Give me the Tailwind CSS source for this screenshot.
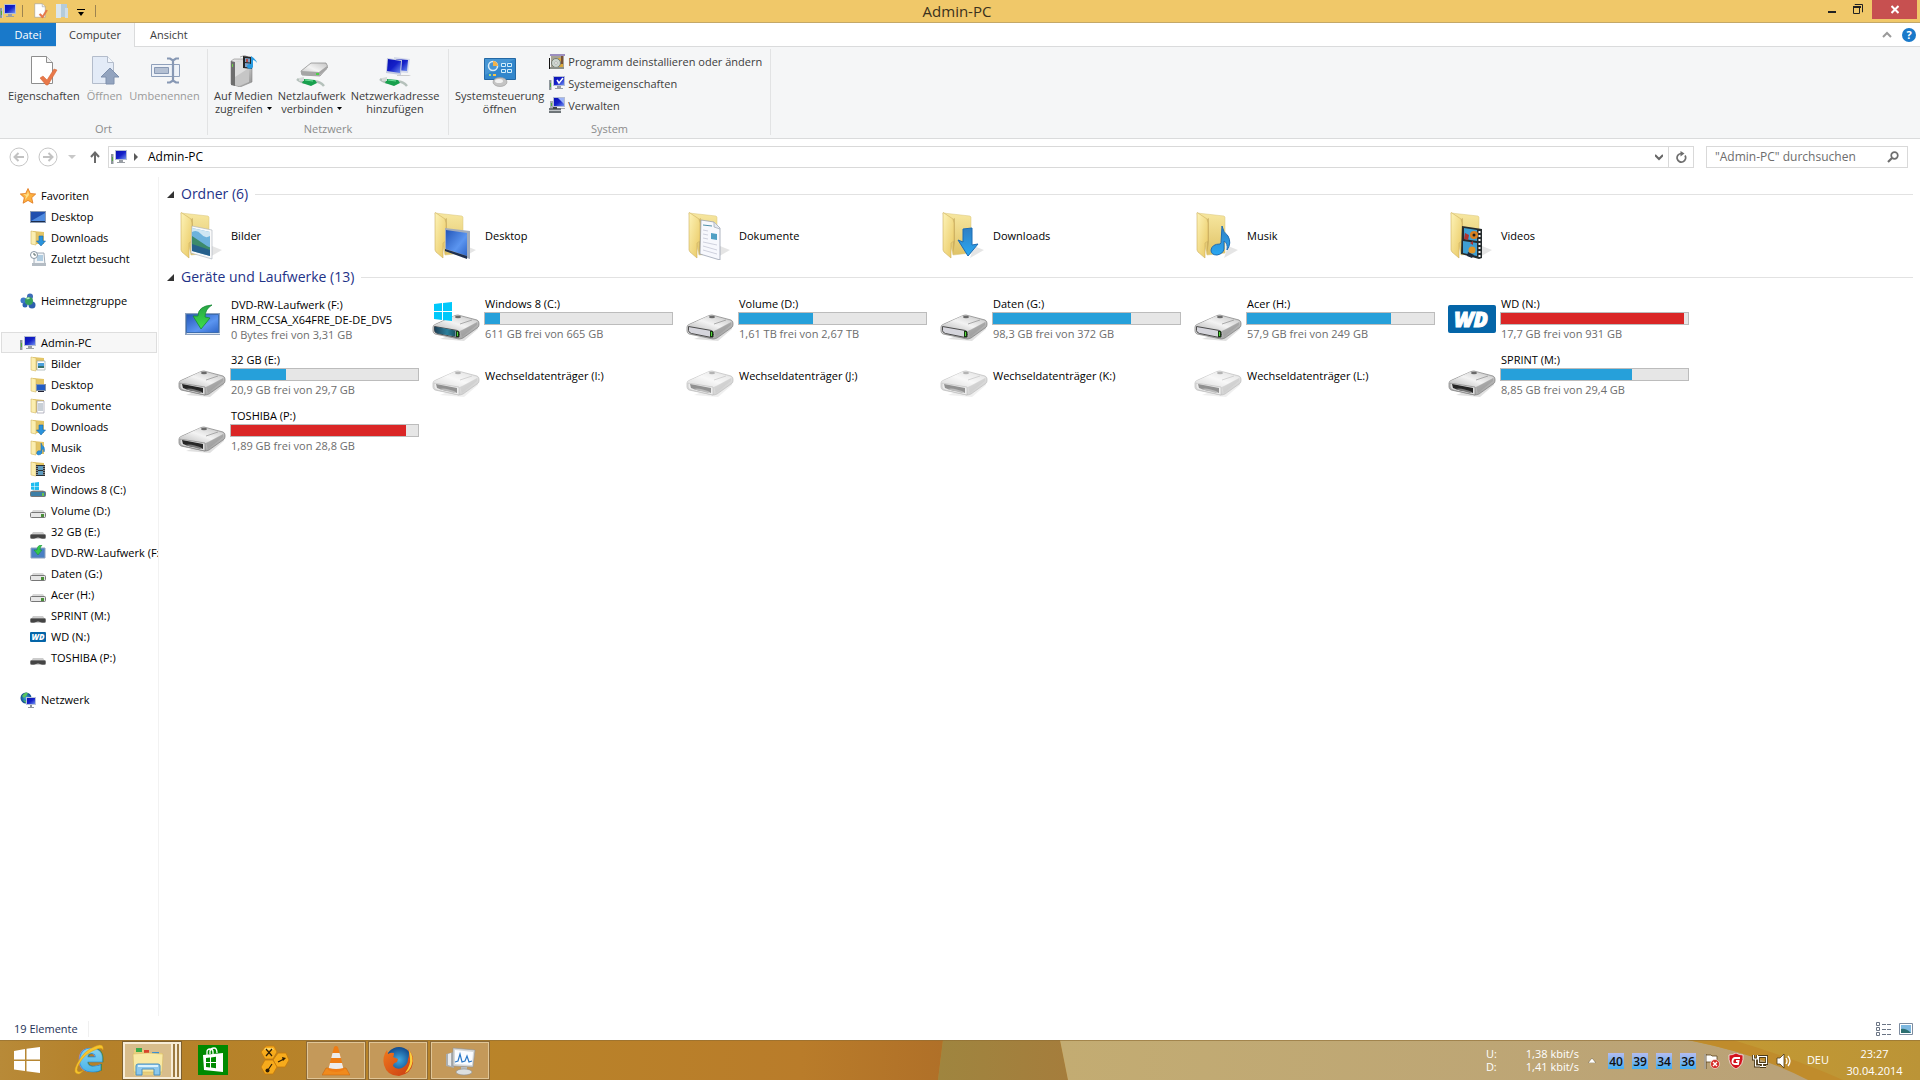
<!DOCTYPE html>
<html lang="de">
<head>
    <meta charset="UTF-8">
    <meta name="viewport" content="width=device-width, initial-scale=1.0">
    <title>Admin-PC</title>
    <script src="https://cdn.jsdelivr.net/npm/@tailwindcss/browser@4"></script>
</head>
<body class="h-screen flex flex-col overflow-hidden bg-white font-['Open_Sans','Noto_Sans',sans-serif] text-[12px] leading-4 text-black">

    <!-- Symbole -->
    <svg class="absolute w-0 h-0" aria-hidden="true">
        <defs>
            <linearGradient id="g-front" x1="0" y1="0" x2="1" y2="1"><stop offset="0" stop-color="#fdf3b8"/><stop offset="1" stop-color="#e9c75f"/></linearGradient>
            <linearGradient id="g-back" x1="0" y1="0" x2="0" y2="1"><stop offset="0" stop-color="#f7e7a0"/><stop offset="1" stop-color="#dfc266"/></linearGradient>
            <linearGradient id="g-screen" x1="0" y1="0" x2="1" y2="1"><stop offset="0" stop-color="#0a12b4"/><stop offset=".5" stop-color="#1420c8"/><stop offset="1" stop-color="#6f8ff0"/></linearGradient>
            <linearGradient id="g-desk" x1="0" y1="0" x2="1" y2="1"><stop offset="0" stop-color="#2456b8"/><stop offset=".6" stop-color="#5b95f0"/><stop offset="1" stop-color="#2f66c8"/></linearGradient>
            <linearGradient id="g-arrow" x1="0" y1="0" x2="0" y2="1"><stop offset="0" stop-color="#2f7fc4"/><stop offset="1" stop-color="#2aa8f2"/></linearGradient>
            <linearGradient id="g-metal" x1="0" y1="0" x2="1" y2="1"><stop offset="0" stop-color="#e9e9e9"/><stop offset=".5" stop-color="#cfcfcf"/><stop offset="1" stop-color="#8c8c8c"/></linearGradient>
            <linearGradient id="g-top" x1="0" y1="1" x2="1" y2="0"><stop offset="0" stop-color="#b9b9b9"/><stop offset=".5" stop-color="#f3f3f3"/><stop offset="1" stop-color="#c4c4c4"/></linearGradient>
            <linearGradient id="g-win" x1="0" y1="0" x2="1" y2="0"><stop offset="0" stop-color="#1f3f55"/><stop offset=".6" stop-color="#2a7f9c"/><stop offset="1" stop-color="#1c5561"/></linearGradient>
            <linearGradient id="g-green" x1="0" y1="0" x2="0" y2="1"><stop offset="0" stop-color="#27a344"/><stop offset="1" stop-color="#3fe04a"/></linearGradient>
            <linearGradient id="g-ie" x1="0" y1="0" x2="0" y2="1"><stop offset="0" stop-color="#bdeefd"/><stop offset="1" stop-color="#2ba4e0"/></linearGradient>
            <linearGradient id="g-temp" x1="0" y1="0" x2="0" y2="1"><stop offset="0" stop-color="#b4bcf0"/><stop offset="1" stop-color="#45aef0"/></linearGradient>
            <linearGradient id="g-fox" x1="0" y1="0" x2="1" y2="1"><stop offset="0" stop-color="#f07a1c"/><stop offset="1" stop-color="#c93a12"/></linearGradient>
            <radialGradient id="g-globe"><stop offset="0" stop-color="#3fa9e0"/><stop offset="1" stop-color="#124a8c"/></radialGradient>
        </defs>

        <symbol id="pc" viewBox="0 0 16 16">
            <path d="M0 5h3v10H0z" fill="#8f979d"/><path d="M2 5h1v10H2z" fill="#c9cdd0"/><path d="M1 8h1v4H1z" fill="#4fae3a"/>
            <path d="M4 1h12v10H4z" fill="#b4bdd3"/><path d="M5 2h10v8H5z" fill="url(#g-screen)"/>
            <path d="M8 11h4v2H8zM6 13h8v1H6z" fill="#9a9fa5"/>
        </symbol>
        <symbol id="page-check" viewBox="0 0 32 32">
            <path d="M3.500 1.500h15l6 6v21h-21z" fill="#fff" stroke="#8e8e8e"/><path d="M18.500 1.500v6h6" fill="#f2f2f2" stroke="#8e8e8e"/>
            <path d="M12 23l3-2 4 4 7-11 3 1-9 15h-2z" fill="#e8784a" stroke="#d2602f" stroke-width=".5"/>
        </symbol>
        <symbol id="page-open" viewBox="0 0 32 32">
            <path d="M3.500 1.500h15l6 6v21h-21z" fill="#e3ebf7" stroke="#b3bccb"/><path d="M18.500 1.500v6h6" fill="#f4f7fc" stroke="#b3bccb"/>
            <path d="M21 13l9 9h-5v7h-8v-7h-5z" fill="#93a4bf" stroke="#7e90ad"/>
        </symbol>
        <symbol id="rename" viewBox="0 0 32 32">
            <path d="M2.500 9.500h28v12h-28z" fill="#eef2f8" stroke="#8fa0bb"/><path d="M5.500 12.500h14v6h-14z" fill="#b4c0d3" stroke="#8798b4"/>
            <path d="M18 3.500h3l3 2 3-2h3M24 5v22M18 27.500h3l3-2 3 2h3" fill="none" stroke="#8798b4" stroke-width="2.200"/>
        </symbol>
        <symbol id="media" viewBox="0 0 32 32">
            <path d="M4 6l3-2h15l3 2v21l-12 5-9-3z" fill="url(#g-metal)" stroke="#868686" stroke-width=".6"/>
            <path d="M4 6l4 1v24l-4-1z" fill="#6e6e6e"/><path d="M8 7l14-2v22l-10 4-4-1z" fill="#c6c6c6"/><path d="M8 7l14-2v8L8 22z" fill="#dedede"/><path d="M5 9h1v3H5z" fill="#6fd04a"/>
            <path d="M13 2q5-3 8 0" fill="none" stroke="#aaa"/>
            <path d="M16 1l9 1v12l-9-1z" fill="#262626"/><path d="M18 3l5 .5v4l-5-.5zM18 8l5 .5v4l-5-.5z" fill="#7aa0c8"/><path d="M19 4h2v3h-2z" fill="#b44b46"/>
            <path d="M26 1v10a3 2.500 0 1 1-2-2V1q5 3 6 7-2-3-4-3z" fill="#2a9be0"/>
        </symbol>
        <symbol id="plug" viewBox="0 0 32 32">
            <path d="M1 24q6 5 14 3t13 4" fill="none" stroke="#b5c1bb" stroke-width="2.500"/><path d="M8 24l11 1 2 3-6 3-9-3z" fill="#18a04e"/><path d="M9 25l8 1" stroke="#6fe09a"/><path d="M3 23l5-1v4H3z" fill="#d5dad8"/>
        </symbol>
        <symbol id="netdrive" viewBox="0 0 32 32">
            <path d="M5 16L15 8h15l2 4-8 9-18-1z" fill="url(#g-top)" stroke="#858585" stroke-width=".7"/><path d="M5 16l18 1 8-6v3l-8 7-17-1z" fill="#a5a5a5"/><path d="M20 18h3v2h-3z" fill="#4bd048"/>
            <use href="#plug"/>
        </symbol>
        <symbol id="netplace" viewBox="0 0 32 32">
            <path d="M15 2l16 2-2 14-13-1z" fill="#d4d9ea"/><path d="M17 4l12 1-1 11-11-1z" fill="url(#g-screen)"/>
            <path d="M8 3l15 2-1 15-15-2z" fill="#c3cae0"/><path d="M9 4l13 2-1 12-13-2z" fill="url(#g-screen)"/>
            <path d="M18 20h12l2 1H18z" fill="#ccc"/><use href="#plug"/>
        </symbol>
        <symbol id="control" viewBox="0 0 32 32">
            <path d="M.5 3.500h31v21H.5z" fill="#3286cb" stroke="#2468a4"/><path d="M1 4h30L1 20z" fill="#5aa6de" opacity=".5"/>
            <circle cx="9" cy="11" r="4.500" fill="none" stroke="#d8ecf8" stroke-width="1.500"/><path d="M9 11V6a5 5 0 0 1 5 5z" fill="#f0b24a"/>
            <path d="M17.500 8.500h4v3h-4zM23.500 8.500h4v3h-4zM17.500 14.500h4v3h-4zM23.500 14.500h4v3h-4z" fill="#2a8ad0" stroke="#d2ecfa"/>
            <path d="M5 19h2v2H5z" fill="#9fe07a"/><path d="M9 19h3v2H9z" fill="#f4c14d"/>
            <ellipse cx="16" cy="27" rx="7" ry="4.500" fill="#c4c4c4" stroke="#999" stroke-width=".6"/><ellipse cx="15" cy="26" rx="4" ry="2" fill="#f2f2f2"/>
        </symbol>
        <symbol id="uninstall" viewBox="0 0 16 16">
            <path d="M1 1h15v2H1z" fill="#9c8fc0"/><path d="M2 3h13v12H2z" fill="#a9a493"/><path d="M9 5h5v9H9z" fill="#dba93a"/><path d="M12 3h2v8h-2z" fill="#7a5236"/>
            <circle cx="7" cy="10" r="4.500" fill="#ccd5ce" stroke="#747a72"/><circle cx="7" cy="10" r="1.300" fill="#fff" stroke="#888" stroke-width=".5"/><path d="M0 5h1v11H0z" fill="#111"/><path d="M1 14h14v2H1z" fill="#8c9189"/>
        </symbol>
        <symbol id="pc-check" viewBox="0 0 16 16"><use href="#pc"/><path d="M8 5l2 3 4-5" fill="none" stroke="#fff" stroke-width="1.500"/></symbol>
        <symbol id="manage" viewBox="0 0 16 16">
            <path d="M4 0h12v10H4z" fill="#b4bdd3"/><path d="M5 1h10v8H5z" fill="url(#g-screen)"/><path d="M9 1h6v6z" fill="#9db4f6"/>
            <path d="M1 4h3v7H1z" fill="#a8adb2"/><path d="M2 6h1v3H2z" fill="#4fae3a"/><path d="M0 11h12v5H0z" fill="#6e7478"/><path d="M4 10h4v2H4z" fill="#3f4447"/><path d="M0 13h12v1H0z" fill="#c1c5c8"/><path d="M12 11h4v1h-4z" fill="#aaa"/>
        </symbol>

        <!-- Ordner 48px -->
        <symbol id="folder" viewBox="0 0 48 48">
            <path d="M30 46l14-8-10-4z" fill="#000" opacity=".1"/>
            <path d="M3 1l27 3 1 1v36l-18 2z" fill="url(#g-back)" stroke="#d9c47c" stroke-width=".5"/>
            <path d="M13 7l2-1v24l-2 12z" fill="#b8964a" opacity=".5"/>
            <path d="M3 1q0-1 1 0l9 6 1 4v18l-3 2v15l-7-6-1-2z" fill="url(#g-front)" stroke="#cdb060" stroke-width=".6"/>
        </symbol>
        <symbol id="f-bilder" viewBox="0 0 48 48"><use href="#folder"/>
            <path d="M14 14l20 4v29l-21-6z" fill="#fafafa" stroke="#a8b0b8" stroke-width=".6"/><path d="M14 16l18 4v24l-18-5z" fill="#6db2dc"/><path d="M14 20q5-3 9 2t9 2v-4l-18-4z" fill="#cfe6f3"/><path d="M14 28q8 1 18 9v7l-18-5z" fill="#26608c"/><path d="M14 24q6 4 12 8t6 3v3q-9-3-18-6z" fill="#3d8a6a"/>
        </symbol>
        <symbol id="f-desktop" viewBox="0 0 48 48"><use href="#folder"/>
            <path d="M13 16l25 3v28l-25-8z" fill="#a4adba"/><path d="M14 18l21 3v23l-21-7z" fill="url(#g-desk)"/><path d="M13 37l22 7v3l-22-8z" fill="#1e2f4e"/>
        </symbol>
        <symbol id="f-dokumente" viewBox="0 0 48 48"><use href="#folder"/>
            <path d="M15 8l13 2 6 6v32l-20-6z" fill="#f7f8fd" stroke="#8e97a8" stroke-width=".7"/><path d="M28 10v5l6 2" fill="#e3e8f0" stroke="#8e97a8" stroke-width=".6"/>
            <path d="M17 13l9 1" stroke="#4f8fa8"/><path d="M25 21l6 1v6l-6-1z" fill="#4f9fc4"/><path d="M17 18l5 1M17 22l5 1M17 26l5 1M17 30l14 3M17 34l14 4M17 38l14 4" stroke="#c4c6d4" stroke-width=".8"/>
        </symbol>
        <symbol id="f-downloads" viewBox="0 0 48 48"><use href="#folder"/><path d="M23 17l9-1v17l6-1-10 12-10-16 5 2z" fill="url(#g-arrow)" stroke="#1d6cb4"/></symbol>
        <symbol id="f-musik" viewBox="0 0 48 48"><use href="#folder"/><path d="M28 14q1 6 6 10 4 7-1 14 1-7-3-9v8q-1 5-7 6-6 0-6-5 1-6 9-6l1-1z" fill="url(#g-arrow)" stroke="#1d6cb4"/></symbol>
        <symbol id="f-videos" viewBox="0 0 48 48"><use href="#folder"/>
            <path d="M14 14l20 3v29l-3 1-18-5z" fill="#252b2d"/><path d="M16 16l13 2v11l-13-2zM15 29l14 2v13l-14-3z" fill="#3f9fd2"/>
            <circle cx="26" cy="23" r="4" fill="#d9801f"/><circle cx="26" cy="23" r="1.500" fill="#1d1d1d"/><path d="M17 21l4 2-1 5-4-1zM22 31l3-2v4z" fill="#b0322c"/><circle cx="24" cy="38" r="3.500" fill="#e09527"/><path d="M20 40l6 3-2 3-5-2z" fill="#1d2a3a"/>
            <path d="M31.500 19v26" stroke="#f2f2f2" stroke-width="2" stroke-dasharray="2 2"/>
        </symbol>

        <!-- Laufwerke 48px -->
        <symbol id="drive-body" viewBox="0 0 48 48">
            <path d="M8 44l24 2 14-12v-4z" fill="#000" opacity=".12"/>
            <path d="M1 32q0-2 3-3l18-8q2-1 4-1l19 5q2 1 2 3v2q0 2-2 3L31 43q-2 1-4 1L3 39q-2-1-2-3z" fill="url(#g-metal)" stroke="#7f7f7f" stroke-width=".7"/>
            <path d="M2 31q0-1 3-2l17-8h4l19 5q1 1-1 2L31 35q-2 1-4 1z" fill="url(#g-top)"/>
            <path d="M28 36l17-9v3L30 42z" fill="#999" opacity=".6"/><ellipse cx="26" cy="22" rx="3" ry="1.200" fill="#6a6a6a"/><path d="M28 29l12-4" stroke="#999" stroke-width=".8"/>
        </symbol>
        <symbol id="d-hdd" viewBox="0 0 48 48"><use href="#drive-body"/>
            <path d="M2.500 31.500l23 4q2 1 2 3v2q0 2-2 2l-20-4q-3-1-3-3z" fill="#d5d5dc" stroke="#4c4c4c"/><path d="M24 36h3v6h-3z" fill="#16380f"/><path d="M25 37h1v4h-1z" fill="#52d83a"/>
        </symbol>
        <symbol id="d-win" viewBox="0 0 48 48"><use href="#d-hdd"/>
            <path d="M2.500 31.500l21 4v6l-18-3q-3-1-3-3z" fill="url(#g-win)"/>
            <path d="M2 9l8-1v8H2zM11 8l9-1v9h-9zM2 17h8v8l-8-1zM11 17h9v9l-9-1z" fill="#00c8fa"/>
        </symbol>
        <symbol id="d-usb" viewBox="0 0 48 48"><use href="#drive-body"/>
            <path d="M2 32l25 4v8L5 39q-3-1-3-3z" fill="#ddd" stroke="#777" stroke-width=".6"/><path d="M4 33l21 4v5q-3-2-8-2T5 37z" fill="#262626"/><path d="M7 38q6-2 17 3l-2 1z" fill="#777"/>
        </symbol>
        <symbol id="d-empty" viewBox="0 0 48 48"><g opacity=".5"><use href="#d-usb"/></g></symbol>
        <symbol id="d-setup" viewBox="0 0 48 48">
            <path d="M7 18h35v22H7z" fill="#8ea2bf"/><path d="M8.500 19.500h32v18h-32z" fill="url(#g-desk)" stroke="#3c6db0"/><path d="M9 38h33v1H9z" fill="#dbe4ef"/>
            <path d="M34 10q-14 1-14 11h-5l8 13 9-11-5-1q0-8 7-12z" fill="url(#g-green)" stroke="#178a35" stroke-width=".8"/>
        </symbol>
        <symbol id="d-wd" viewBox="0 0 48 48">
            <rect y="10" width="48" height="28" rx="2" fill="#0465a8"/><text x="23" y="32" text-anchor="middle" font-family="Open Sans, sans-serif" font-size="21" font-weight="800" font-style="italic" fill="#fff" stroke="#fff">WD</text>
        </symbol>

        <!-- Kleine Symbole 16px -->
        <symbol id="s-star" viewBox="0 0 16 16"><path d="M8 .5l2.300 5 5.400.5-4 3.700 1.200 5.500L8 12.400l-4.900 2.800 1.200-5.500L.3 6l5.400-.5z" fill="#fcb040" stroke="#e0761a" stroke-width=".8"/><path d="M8 3l1 4-4 5 1-4-3-2 4 .5z" fill="#ffe08a"/></symbol>
        <symbol id="s-screen" viewBox="0 0 16 16"><path d="M0 2h16v12H0z" fill="#8a9bb5"/><path d="M1 3h14v9H1z" fill="#1f4fae"/><path d="M1 12L15 4v8z" fill="#4f8be0"/><path d="M1 12h14v1H1z" fill="#1a2c4c"/></symbol>
        <symbol id="s-folder" viewBox="0 0 16 16"><path d="M3 1l11 1v12H3z" fill="#e3c566"/><path d="M1 1l5 1v13l-5-1z" fill="#fbeeb0" stroke="#d3b762" stroke-width=".6"/></symbol>
        <symbol id="s-downloads" viewBox="0 0 16 16"><use href="#s-folder"/><path d="M9 6h4v5h2.500L11 16 6.500 11H9z" fill="#2a93dc" stroke="#1c69ad" stroke-width=".6"/></symbol>
        <symbol id="s-bilder" viewBox="0 0 16 16"><use href="#s-folder"/><path d="M7 5h8v9H7z" fill="#fff" stroke="#9aa" stroke-width=".7"/><path d="M8 7h6v3H8z" fill="#4aa0dc"/><path d="M8 10h6v2H8z" fill="#36716c"/></symbol>
        <symbol id="s-desktop" viewBox="0 0 16 16"><use href="#s-folder"/><path d="M6 7h10v7H6z" fill="#8393aa"/><path d="M7 8h8v5H7z" fill="#235cc4"/><path d="M8 14h6v1H8z" fill="#223"/></symbol>
        <symbol id="s-dokumente" viewBox="0 0 16 16"><use href="#s-folder"/><path d="M7 3h7v12H7z" fill="#fff" stroke="#99a" stroke-width=".7"/><path d="M8 6h5M8 8h5M8 10h5M8 12h5" stroke="#789" stroke-width=".8"/></symbol>
        <symbol id="s-musik" viewBox="0 0 16 16"><use href="#s-folder"/><path d="M11 3q1 3 3 4 1 3 0 5 0-3-2-3v4q-1 2-4 2-2-1-1-3 1-2 4-1z" fill="#2a93dc" stroke="#1c69ad" stroke-width=".5"/></symbol>
        <symbol id="s-videos" viewBox="0 0 16 16"><use href="#s-folder"/><path d="M6 4h9v11H6z" fill="#2b3134"/><path d="M8 5h5v4H8zM8 10h5v4H8z" fill="#5f9cc0"/><path d="M14 5v10M7 5v10" stroke="#ddd" stroke-dasharray="1 1"/></symbol>
        <symbol id="s-recent" viewBox="0 0 16 16"><path d="M4 2h10l1 12H4z" fill="#f2f5f8" stroke="#8c98a5" stroke-width=".8"/><path d="M7 5h6M7 7h6M7 9h6" stroke="#6fa3c8"/><circle cx="4" cy="4" r="3.500" fill="#fff" stroke="#8795a2"/><path d="M4 2v2h2" fill="none" stroke="#566"/><path d="M2 12h14v3H2z" fill="#b4bcc4"/></symbol>
        <symbol id="s-home" viewBox="0 0 16 16"><circle cx="3.500" cy="7.500" r="3" fill="#3f78c8"/><circle cx="10" cy="3.500" r="3" fill="#3f6db8"/><circle cx="12" cy="12" r="3.500" fill="#2d5fae"/><circle cx="5" cy="12" r="2.500" fill="#2b62b2"/><circle cx="9" cy="8" r="4" fill="#35a05b"/><path d="M6 6q2-3 4-1-1 2-4 1z" fill="#b8ecc4"/></symbol>
        <symbol id="s-net" viewBox="0 0 16 16"><circle cx="6" cy="6" r="5.500" fill="url(#g-globe)"/><path d="M2 4q3-5 6-3-1 3-4 5zM3 8l3 1v2z" fill="#57c45c"/><path d="M6 5h10v8H6z" fill="#b9c3da"/><path d="M7 6h8v6H7z" fill="url(#g-screen)"/><path d="M10 13h2v2h-2zM8 15h6v1H8z" fill="#8d949c"/></symbol>
        <symbol id="s-hdd" viewBox="0 0 16 16"><path d="M3 7h10l2 3H1z" fill="#d8d8d8"/><rect x=".5" y="9.500" width="15" height="5" rx="1" fill="#e6e6e6" stroke="#777"/><path d="M11 11h3v3h-3z" fill="#4b8f3a"/></symbol>
        <symbol id="s-usb" viewBox="0 0 16 16"><path d="M3 8h10l2 3H1z" fill="#ccc"/><rect x=".5" y="10.500" width="15" height="4" rx="1" fill="#444" stroke="#777"/><path d="M4 15q4-3 8 0z" fill="#ccc"/></symbol>
        <symbol id="s-win" viewBox="0 0 16 16"><path d="M1 1l3.500-.5V4H1zM5 .5L9 0v4H5zM1 4.500h3.500V8L1 7.500zM5 4.500h4v4L5 8z" fill="#1fbdf0"/><path d="M3 8h10l2 2H1z" fill="#c9c9c9"/><rect x=".5" y="9.500" width="15" height="5" rx="1" fill="#3d7fa6" stroke="#777"/><path d="M12 11h2v3h-2z" fill="#6ac24c"/></symbol>
        <symbol id="s-setup" viewBox="0 0 16 16"><path d="M1 3h14v10H1z" fill="#4a7fc4" stroke="#8ea2bf"/><path d="M12 0Q7 0 7 5H4l4 5 4-5h-2q0-3 2-5z" fill="#35c84c" stroke="#178a35" stroke-width=".5"/></symbol>
        <symbol id="s-wd" viewBox="0 0 16 16"><rect y="3" width="16" height="10" rx="1" fill="#0465a8"/><text x="8" y="11" text-anchor="middle" font-family="Open Sans, sans-serif" font-size="8" font-weight="800" font-style="italic" fill="#fff">WD</text></symbol>
    </svg>

    <!-- Titelleiste -->
    <header class="shrink-0 h-[23px] grid grid-cols-[1fr_auto_1fr] items-center bg-[#f0c869] border-b border-[#c4a868]">
        <div class="flex items-center gap-[6px]">
            <svg class="w-4 h-4"><use href="#pc"/></svg>
            <span class="w-px h-3 bg-[#9d8450]"></span>
            <button class="ml-1" aria-label="Eigenschaften"><svg class="w-4 h-4"><use href="#page-check"/></svg></button>
            <button aria-label="Neuer Ordner"><svg class="w-4 h-4" viewBox="0 0 16 16"><path d="M1 1h5v14H1z" fill="#dbe6ee"/><path d="M6 1h6v13H6z" fill="#b4cbda"/><path d="M10 5h3v10h-3z" fill="#cfdde6"/></svg></button>
            <button aria-label="Symbolleiste anpassen"><svg class="w-2 h-4" viewBox="0 0 8 16"><path d="M0 6h8v1H0zM1 9h6l-3 4z"/></svg></button>
            <span class="ml-1 w-px h-3 bg-[#9d8450]"></span>
        </div>
        <h1 class="pr-[6px] text-[15px] leading-5 text-[#3a311c]">Admin-PC</h1>
        <div class="flex justify-end self-start pr-[3px]">
            <button class="w-[40px] h-[19px] flex justify-center" aria-label="Minimieren"><svg class="w-3 h-[19px]" viewBox="0 0 12 19"><path d="M2 11h8v2H2z" fill="#222"/></svg></button>
            <button class="w-[20px] h-[19px] flex justify-start" aria-label="Wiederherstellen"><svg class="w-3 h-[19px]" viewBox="0 0 12 19"><path d="M3 5V4.500h7.500V12H10M1.500 7.500h6v6h-6z" fill="none" stroke="#222"/><path d="M1 6h8v2H1z" fill="#222"/></svg></button>
            <button class="w-[45px] h-[19px] flex justify-center bg-[#c75050]" aria-label="Schließen"><svg class="w-2 h-[19px]" viewBox="0 0 8 19"><path d="M.5 6l7 7M7.500 6l-7 7" stroke="#fff" stroke-width="2"/></svg></button>
        </div>
    </header>

    <!-- Registerkarten -->
    <nav class="shrink-0 h-6 flex text-[11px] text-[#3c3c3c] border-b border-[#dadbdc]">
        <button class="w-14 bg-[#1979ca] text-white">Datei</button>
        <button class="w-[79px] -mb-px bg-[#f5f6f7] border-r border-[#dadbdc]">Computer</button>
        <button class="px-[15px]">Ansicht</button>
        <div class="ml-auto flex items-center gap-[10px] pr-1">
            <button aria-label="Menüband minimieren"><svg class="w-[10px] h-[10px]" viewBox="0 0 10 10"><path d="M1 7l4-4 4 4" fill="none" stroke="#9a9a9a" stroke-width="2"/></svg></button>
            <button class="w-[14px] h-[14px] rounded-full bg-[#1979ca] text-white text-[11px] leading-[14px] font-bold" aria-label="Hilfe">?</button>
        </div>
    </nav>

    <!-- Menüband -->
    <section class="shrink-0 h-[92px] flex pt-[2px] pb-[3px] bg-[#f5f6f7] border-b border-[#dadbdc] text-[11px] leading-[13px] text-[#3c3c3c]">
        <div class="flex flex-col justify-between border-r border-[#e2e3e4] px-[6px] w-[208px]">
            <div class="flex items-start gap-[3px]">
                <button class="flex flex-col items-center px-[2px] pt-[6px]"><svg class="w-8 h-8 mb-[2px]"><use href="#page-check"/></svg>Eigenschaften</button>
                <button class="flex flex-col items-center px-[2px] pt-[6px] text-[#9a9a9a]" disabled><svg class="w-8 h-8 mb-[2px]"><use href="#page-open"/></svg>Öffnen</button>
                <button class="flex flex-col items-center px-[2px] pt-[6px] text-[#9a9a9a]" disabled><svg class="w-8 h-8 mb-[2px]"><use href="#rename"/></svg>Umbenennen</button>
            </div>
            <p class="text-center text-[#8c8c8c]">Ort</p>
        </div>
        <div class="flex flex-col justify-between border-r border-[#e2e3e4] px-1 w-[241px]">
            <div class="flex items-start gap-px">
                <button class="flex flex-col items-center px-[2px] pt-[6px]"><svg class="w-8 h-8 mb-[2px]"><use href="#media"/></svg>Auf Medien<span class="flex items-center gap-1">zugreifen<svg class="w-[5px] h-[3px]" viewBox="0 0 5 3"><path d="M0 0h5L2.500 3z"/></svg></span></button>
                <button class="flex flex-col items-center px-[2px] pt-[6px]"><svg class="w-8 h-8 mb-[2px]"><use href="#netdrive"/></svg>Netzlaufwerk<span class="flex items-center gap-1">verbinden<svg class="w-[5px] h-[3px]" viewBox="0 0 5 3"><path d="M0 0h5L2.500 3z"/></svg></span></button>
                <button class="flex flex-col items-center px-[2px] pt-[6px]"><svg class="w-8 h-8 mb-[2px]"><use href="#netplace"/></svg>Netzwerkadresse<span>hinzufügen</span></button>
            </div>
            <p class="text-center text-[#8c8c8c]">Netzwerk</p>
        </div>
        <div class="flex flex-col justify-between border-r border-[#e2e3e4] px-1 w-[322px]">
            <div class="flex items-start gap-[3px]">
                <button class="flex flex-col items-center px-[2px] pt-[6px]"><svg class="w-8 h-8 mb-[2px]"><use href="#control"/></svg>Systemsteuerung<span>öffnen</span></button>
                <div class="flex flex-col gap-[6px] pt-[4px]">
                    <button class="flex items-center gap-[3px]"><svg class="w-4 h-4"><use href="#uninstall"/></svg>Programm deinstallieren oder ändern</button>
                    <button class="flex items-center gap-[3px]"><svg class="w-4 h-4"><use href="#pc-check"/></svg>Systemeigenschaften</button>
                    <button class="flex items-center gap-[3px]"><svg class="w-4 h-4"><use href="#manage"/></svg>Verwalten</button>
                </div>
            </div>
            <p class="text-center text-[#8c8c8c]">System</p>
        </div>
    </section>

    <!-- Adressleiste -->
    <div class="shrink-0 h-[38px] flex items-center pb-[2px] pl-[9px] pr-3">
        <button aria-label="Zurück"><svg class="w-5 h-5" viewBox="0 0 20 20"><circle cx="10" cy="10" r="9" fill="none" stroke="#c6c6c6"/><path d="M15 10H6M9.500 6L5.500 10l4 4" fill="none" stroke="#c2c2c2" stroke-width="2"/></svg></button>
        <button class="ml-[9px]" aria-label="Vorwärts"><svg class="w-5 h-5" viewBox="0 0 20 20"><circle cx="10" cy="10" r="9" fill="none" stroke="#c6c6c6"/><path d="M5 10h9M10.500 6l4 4-4 4" fill="none" stroke="#c2c2c2" stroke-width="2"/></svg></button>
        <button class="ml-[10px]" aria-label="Verlauf"><svg class="w-2 h-1" viewBox="0 0 8 4"><path d="M0 0h8L4 4z" fill="#c8c8c8"/></svg></button>
        <button class="ml-[14px]" aria-label="Nach oben"><svg class="w-[10px] h-3" viewBox="0 0 10 12"><path d="M5 12V2M1 6l4-4.500L9 6" fill="none" stroke="#6a6a6a" stroke-width="2"/></svg></button>
        <div class="ml-2 flex-1 h-[22px] flex items-center border border-[#d9d9d9]">
            <svg class="ml-[2px] w-4 h-4"><use href="#pc"/></svg>
            <svg class="ml-[7px] w-1 h-2" viewBox="0 0 4 8"><path d="M0 0l4 4-4 4z" fill="#5a5a5a"/></svg>
            <span class="ml-[10px]">Admin-PC</span>
            <button class="ml-auto mr-[5px]" aria-label="Vorherige Orte"><svg class="w-2 h-2" viewBox="0 0 8 8"><path d="M0 2l4 4 4-4" fill="none" stroke="#666" stroke-width="2"/></svg></button>
            <button class="w-[25px] h-full flex items-center justify-center border-l border-[#d9d9d9]" aria-label="Aktualisieren"><svg class="w-3 h-3" viewBox="0 0 12 12"><path d="M10 4.500A4.300 4.300 0 1 1 6 2.500" fill="none" stroke="#6e6e6e" stroke-width="1.700"/><path d="M5.500 0l4 2.500-4 3z" fill="#6e6e6e"/></svg></button>
        </div>
        <div class="ml-3 w-[202px] h-[22px] flex items-center border border-[#d9d9d9] pl-2 pr-2">
            <input class="flex-1 min-w-0 outline-none placeholder:text-[#6d6d6d]" type="text" aria-label="Suchen" placeholder="&quot;Admin-PC&quot; durchsuchen">
            <svg class="w-3 h-3" viewBox="0 0 12 12"><circle cx="7.500" cy="4.500" r="3.300" fill="none" stroke="#6e6e6e" stroke-width="1.700"/><path d="M5 7l-4 4" stroke="#6e6e6e" stroke-width="2.200"/></svg>
        </div>
    </div>

    <!-- Hauptbereich -->
    <main class="flex-1 min-h-0 flex text-[11px]">
        <nav class="w-[159px] shrink-0 pt-2 border-r border-[#f2f2f2] overflow-hidden">
            <ul id="nav-list"></ul>
        </nav>
        <div class="flex-1 min-w-0 pt-[6px] pl-2 pr-[7px]">
            <h2 class="flex items-center h-[22px] text-[14px] leading-5 text-[#1e3287]">
                <svg class="w-[7px] h-[7px] mr-[7px]" viewBox="0 0 7 7"><path d="M7 0v7H0z" fill="#333"/></svg>Ordner (6)<span class="flex-1 h-px ml-[7px] bg-[#e2e2e2]"></span>
            </h2>
            <ul id="folder-list" class="mt-px grid grid-cols-[repeat(auto-fill,254px)] pl-[11px]"></ul>
            <h2 class="flex items-center h-[22px] text-[14px] leading-5 text-[#1e3287]">
                <svg class="w-[7px] h-[7px] mr-[7px]" viewBox="0 0 7 7"><path d="M7 0v7H0z" fill="#333"/></svg>Geräte und Laufwerke (13)<span class="flex-1 h-px ml-[7px] bg-[#e2e2e2]"></span>
            </h2>
            <ul id="drive-list" class="mt-[3px] grid grid-cols-[repeat(auto-fill,254px)] pl-[11px]"></ul>
        </div>
    </main>

    <!-- Statusleiste -->
    <footer class="shrink-0 h-6 flex items-center pt-px pl-[14px] pr-[6px] text-[11px] text-[#1e3256]">
        <span class="pr-[10px] border-r border-[#f0f0f0]">19 Elemente</span>
        <button class="ml-auto" aria-label="Details"><svg class="w-4 h-4" viewBox="0 0 16 16"><path d="M1.500 1.500h3v3h-3zM1.500 6.500h3v3h-3zM1.500 11.500h3v3h-3z" fill="none" stroke="#6b7585"/><path d="M7 3.500h4M12 3.500h4M7 8.500h4M12 8.500h4M7 13.500h4M12 13.500h4" stroke="#6b7585"/></svg></button>
        <button class="ml-[7px]" aria-label="Große Symbole"><svg class="w-4 h-4" viewBox="0 0 16 16"><path d="M1.500 2.500h13v11h-13z" fill="#fff" stroke="#7d8ca0"/><path d="M3 4h10v8H3z" fill="#7db8e0"/><path d="M3 8q5-1 10 4H3z" fill="#2d6f70"/></svg></button>
    </footer>

    <!-- Taskleiste -->
    <div class="relative shrink-0 h-10 flex items-center bg-[#b9852c] text-white">
        <svg class="absolute inset-0 w-full h-full" viewBox="0 0 1920 40" preserveAspectRatio="none" aria-hidden="true">
            <defs>
                <linearGradient id="t-a"><stop offset="0" stop-color="#b88a38"/><stop offset=".1" stop-color="#b5812a"/><stop offset=".5" stop-color="#b98429"/><stop offset=".85" stop-color="#b97c2a"/><stop offset="1" stop-color="#b07028"/></linearGradient>
                <linearGradient id="t-b"><stop offset="0" stop-color="#9f853f"/><stop offset="1" stop-color="#a57d3c"/></linearGradient>
                <linearGradient id="t-c"><stop offset="0" stop-color="#c3ac72"/><stop offset="1" stop-color="#b8a078"/></linearGradient>
                <linearGradient id="t-d"><stop offset="0" stop-color="#c59a32"/><stop offset="1" stop-color="#bb9437"/></linearGradient>
            </defs>
            <path d="M0 0h943l-5 40H0z" fill="url(#t-a)"/><path d="M943 0h117l8 40H938z" fill="url(#t-b)"/><path d="M1060 0h860v40h-852z" fill="url(#t-c)"/>
            <path d="M1688 0h232v40h-100q-60-25-132-40z" fill="url(#t-d)"/><path d="M1688 0h45q60 18 110 40h-35q-50-26-120-40z" fill="#c08c2c"/>
            <path d="M0 0h1920v1H0z" fill="#8e6d34" opacity=".6"/>
        </svg>
        <button class="relative w-[62px] flex justify-center -ml-1" aria-label="Start"><svg class="w-[26px] h-[26px]" viewBox="0 0 26 26"><path d="M0 4l11-2v10.500H0zM12.500 1.800L26 0v12.500H12.500zM0 14h11v10L0 22.500zM12.500 14H26v12l-13.500-1.800z" fill="#fff"/></svg></button>
        <button class="relative w-[64px] flex justify-center" aria-label="Internet Explorer">
            <svg class="w-8 h-8" viewBox="0 0 32 32"><text x="17" y="28" text-anchor="middle" font-family="Open Sans, sans-serif" font-size="43" font-weight="800" fill="url(#g-ie)" stroke="#1c86c8" stroke-width=".7">e</text><path d="M5 30Q-2 30 3 20 10 6 22 2q8-3 7 4-1-3-6-1Q11 9 5 20q-4 7 0 8 2 0 5-2-3 3-5 4z" fill="#f6c62c" stroke="#d89a18" stroke-width=".5"/></svg>
        </button>
        <button class="relative w-[60px] h-[39px] mt-px flex border border-[#7c5f2f]" aria-label="Explorer">
            <span class="flex-1 h-full flex items-center justify-center border-2 border-[#f7ecd6] bg-[#d8bd8c]">
                <svg class="w-8 h-8" viewBox="0 0 32 32"><path d="M2 5h12l2 3h14v22H2z" fill="#e8cf7c"/><path d="M4 3h6v4H4z" fill="#3bab49"/><path d="M12 5h5v3h-5z" fill="#d8452c"/><path d="M20 7h7v3h-7z" fill="#3a8fd4"/><path d="M1 9q15-2 30 0l-1 18H2z" fill="#f8e9a4" stroke="#d8bb62" stroke-width=".6"/><path d="M4 30V21q0-2 2-2h20q2 0 2 2v9h-6v-6H10v6z" fill="#8cc8ec" stroke="#4a90c0"/><path d="M6 21h20" stroke="#daf2fc" stroke-width="2"/></svg>
            </span>
            <span class="w-1 h-full border-y-2 border-r-2 border-[#f7ecd6] bg-[#9c7a42]"></span>
            <span class="w-1 h-full border-y-2 border-r-2 border-[#f7ecd6] bg-[#9c7a42]"></span>
        </button>
        <button class="relative w-[62px] flex justify-center" aria-label="Store"><svg class="w-[30px] h-[30px]" viewBox="0 0 30 30"><path d="M0 0h30v30H0z" fill="#008a00"/><path d="M5 10l20-2v19L6 25z" fill="#fff"/><path d="M9 10V7q0-3 3-3t3 3v2M12 9V6q1-3 4-3t3 5" fill="none" stroke="#fff" stroke-width="1.300"/><path d="M8 13l4-.5V17H8zM13 12.400l5-.6V17h-5zM8 18h4v4.500L8 22zM13 18h5v5.200l-5-.6z" fill="#008a00"/></svg></button>
        <button class="relative w-[62px] flex justify-center" aria-label="TuneUp"><svg class="w-[30px] h-[30px]" viewBox="0 0 30 30"><g fill="#f7ab1c" stroke="#c47a0c" stroke-width=".8"><path d="M6 1h8l3 6-4 7H5L1 7z"/><path d="M18 8h8l3 7-4 7h-8l-4-7z"/><path d="M5 15h8l4 7-4 7H5l-4-7z"/></g><path d="M5 3h8l1 2H4z" fill="#ffd666"/><path d="M6 4l6 7M12 4l-6 7M18 17l6-3M8 25l4-6" stroke="#2d1c05" stroke-width="1.200"/><circle cx="7.500" cy="25.500" r="2" fill="#2d1c05"/><path d="M22 12l4 1-3 3z" fill="#2d1c05"/></svg></button>
        <div class="relative flex gap-[2px]">
            <button class="w-[60px] h-[39px] mt-px flex items-center justify-center border border-[#8c6a38] bg-[#c4995a] inset-ring inset-ring-[#e0c596]" aria-label="VLC"><svg class="w-[28px] h-8" viewBox="0 0 28 32"><path d="M4 23h20l4 7H0z" fill="#f08a1d" stroke="#c4620c" stroke-width=".5"/><path d="M12 2q2-2 4 0l6 23q-8 4-16 0z" fill="#ee7d15"/><path d="M10.500 8h7l1.300 5H9.200zM8 18h12l1.300 5q-7 2-14.600 0z" fill="#ececec"/></svg></button>
            <button class="w-[60px] h-[39px] mt-px flex items-center justify-center border border-[#8c6a38] bg-[#c4995a] inset-ring inset-ring-[#e0c596]" aria-label="Firefox"><svg class="w-8 h-8" viewBox="0 0 32 32"><circle cx="17" cy="15" r="13" fill="url(#g-globe)"/><path d="M26 4q6 6 5 14-2 11-14 13-12 0-15-11Q0 11 5 5l1 4q3-2 6-1 0 3-1 4l5 2-1 3q-4 1-4 4 3 4 9 2 6-3 6-9 2-5 0-10z" fill="url(#g-fox)"/><path d="M27 5q5 7 3 14-2 7-7 9 6-8 5-15z" fill="#fbcf3d"/></svg></button>
            <button class="w-[60px] h-[39px] mt-px flex items-center justify-center border border-[#8c6a38] bg-[#c4995a] inset-ring inset-ring-[#e0c596]" aria-label="Systemmonitor"><svg class="w-8 h-8" viewBox="0 0 32 32"><path d="M2 9l8-2v16l-8-2z" fill="#a9adb0"/><path d="M4 9l3-1v13l-3-1z" fill="#e8eaec"/><path d="M9 3l22 2-2 17-20-1z" fill="#d6d9db" stroke="#8d9194" stroke-width=".6"/><path d="M11 5l18 2-1 13-17-1z" fill="#fafcff"/><path d="M11 17l3-1 2-7 2 8 3-1 2-5 2 6 3-1" fill="none" stroke="#2a78c8" stroke-width="1.200"/><path d="M17 22h6v4h-6z" fill="#b8bcbe"/><ellipse cx="20" cy="27" rx="8" ry="3" fill="#dcdfe0" stroke="#8d9194" stroke-width=".6"/></svg></button>
        </div>

        <div class="relative ml-auto flex items-center">
            <dl class="w-[93px] grid grid-cols-[auto_1fr] text-[11px] leading-[13px]">
                <dt>U:</dt><dd class="text-right">1,38 kbit/s</dd>
                <dt>D:</dt><dd class="text-right">1,41 kbit/s</dd>
            </dl>
            <button class="ml-[9px]" aria-label="Ausgeblendete Symbole"><svg class="w-2 h-[5px]" viewBox="0 0 8 5"><path d="M0 5l4-5 4 5z" fill="#fff" stroke="#6b5836" stroke-width=".5"/></svg></button>
            <div class="ml-3 flex gap-2 pt-px">
                <svg class="w-4 h-4" viewBox="0 0 16 16"><path d="M0 0h16v16H0z" fill="url(#g-temp)"/><text x="8" y="12.500" text-anchor="middle" font-family="Open Sans, sans-serif" font-size="12" font-weight="600" fill="#111">40</text></svg>
                <svg class="w-4 h-4" viewBox="0 0 16 16"><path d="M0 0h16v16H0z" fill="url(#g-temp)"/><text x="8" y="12.500" text-anchor="middle" font-family="Open Sans, sans-serif" font-size="12" font-weight="600" fill="#111">39</text></svg>
                <svg class="w-4 h-4" viewBox="0 0 16 16"><path d="M0 0h16v16H0z" fill="url(#g-temp)"/><text x="8" y="12.500" text-anchor="middle" font-family="Open Sans, sans-serif" font-size="12" font-weight="600" fill="#111">34</text></svg>
                <svg class="w-4 h-4" viewBox="0 0 16 16"><path d="M0 0h16v16H0z" fill="url(#g-temp)"/><text x="8" y="12.500" text-anchor="middle" font-family="Open Sans, sans-serif" font-size="12" font-weight="600" fill="#111">36</text></svg>
                <svg class="w-4 h-4" viewBox="0 0 16 16"><path d="M1 1v15" stroke="#5a4520" stroke-width="3"/><path d="M2 2h5l1 1h5v7H8L7 9H2z" fill="#fff" stroke="#5a4520" stroke-width=".8"/><path d="M1 1v15" stroke="#fff"/><circle cx="11" cy="11" r="4.500" fill="#d42a25" stroke="#fff" stroke-width=".6"/><path d="M9 9l4 4M13 9l-4 4" stroke="#fff" stroke-width="1.400"/></svg>
                <svg class="w-4 h-4" viewBox="0 0 16 16"><path d="M1 2q4 0 7-2 3 2 7 2 1 10-7 14Q0 12 1 2z" fill="#d3131c" stroke="#fff" stroke-width=".7"/><path d="M12 5H7Q5 5 4.500 8T7 11h3l.5-3H8" fill="none" stroke="#fff" stroke-width="1.800"/></svg>
                <svg class="w-4 h-4" viewBox="0 0 16 16"><path d="M1.500 2v4h4V2M3.500 6v7H9M6.500 3.500h8v7h-8zM8 13.500h6" fill="none" stroke="#4c3a18" stroke-width="3"/><path d="M1.500 2v4h4V2M3.500 6v7H8M6.500 3.500h8v7h-8zM8 13.500h6M10.500 11v2" fill="none" stroke="#fff" stroke-width="1.200"/></svg>
                <svg class="w-4 h-4" viewBox="0 0 16 16"><path d="M1 5h3l4-4v14l-4-4H1z" fill="#fff" stroke="#4c3a18" stroke-width=".8"/><path d="M10 5q2 3 0 6M12 3q4 5 0 10" fill="none" stroke="#fff" stroke-width="1.300"/></svg>
            </div>
            <button class="ml-[15px] text-[11px]">DEU</button>
            <time class="w-[91px] pt-[3px] text-center text-[11px] leading-[17px]" datetime="2014-04-30T23:27">23:27<br>30.04.2014</time>
        </div>
    </div>

    <script>
        // Einträge der Navigation; null = Leerzeile
        const navItems = [
            ['s-star', 'Favoriten', 0], ['s-screen', 'Desktop', 1], ['s-downloads', 'Downloads', 1], ['s-recent', 'Zuletzt besucht', 1],
            null,
            ['s-home', 'Heimnetzgruppe', 0],
            null,
            ['pc', 'Admin-PC', 0, true],
            ['s-bilder', 'Bilder', 1], ['s-desktop', 'Desktop', 1], ['s-dokumente', 'Dokumente', 1], ['s-downloads', 'Downloads', 1],
            ['s-musik', 'Musik', 1], ['s-videos', 'Videos', 1], ['s-win', 'Windows 8 (C:)', 1], ['s-hdd', 'Volume (D:)', 1],
            ['s-usb', '32 GB (E:)', 1], ['s-setup', 'DVD-RW-Laufwerk (F:)', 1], ['s-hdd', 'Daten (G:)', 1], ['s-hdd', 'Acer (H:)', 1],
            ['s-usb', 'SPRINT (M:)', 1], ['s-wd', 'WD (N:)', 1], ['s-usb', 'TOSHIBA (P:)', 1],
            null,
            ['s-net', 'Netzwerk', 0]
        ];

        const folders = ['Bilder', 'Desktop', 'Dokumente', 'Downloads', 'Musik', 'Videos'];

        // Laufwerke mit freiem und gesamtem Speicher
        const drives = [
            { icon: 'd-setup', name: 'DVD-RW-Laufwerk (F:)', label: 'HRM_CCSA_X64FRE_DE-DE_DV5', info: '0 Bytes frei von 3,31 GB' },
            { icon: 'd-win', name: 'Windows 8 (C:)', free: 611, total: 665, unit: 'GB' },
            { icon: 'd-hdd', name: 'Volume (D:)', free: 1.61, total: 2.67, unit: 'TB' },
            { icon: 'd-hdd', name: 'Daten (G:)', free: 98.3, total: 372, unit: 'GB' },
            { icon: 'd-hdd', name: 'Acer (H:)', free: 57.9, total: 249, unit: 'GB' },
            { icon: 'd-wd', name: 'WD (N:)', free: 17.7, total: 931, unit: 'GB' },
            { icon: 'd-usb', name: '32 GB (E:)', free: 20.9, total: 29.7, unit: 'GB' },
            { icon: 'd-empty', name: 'Wechseldatenträger (I:)' },
            { icon: 'd-empty', name: 'Wechseldatenträger (J:)' },
            { icon: 'd-empty', name: 'Wechseldatenträger (K:)' },
            { icon: 'd-empty', name: 'Wechseldatenträger (L:)' },
            { icon: 'd-usb', name: 'SPRINT (M:)', free: 8.85, total: 29.4, unit: 'GB' },
            { icon: 'd-usb', name: 'TOSHIBA (P:)', free: 1.89, total: 28.8, unit: 'GB' }
        ];

        const num = (n) => String(n).replace('.', ',');

        document.getElementById('nav-list').innerHTML = navItems.map((item) => {
            if (!item) return '<li class="h-[21px]"></li>';
            const [icon, name, level, active] = item;
            const indent = level ? 'pl-[28px]' : 'pl-[18px]';
            const state = active ? 'border-[#dedede] bg-[#f7f7f7]' : 'border-transparent';
            return `<li><a href="#" class="mx-px h-[21px] flex items-center gap-[5px] border ${state} ${indent} whitespace-nowrap"><svg class="w-4 h-4 shrink-0"><use href="#${icon}"/></svg>${name}</a></li>`;
        }).join('');

        document.getElementById('folder-list').innerHTML = folders.map((name) =>
            `<li><a href="#" class="h-[60px] flex items-center gap-[5px]"><svg class="w-12 h-12 shrink-0"><use href="#f-${name.toLowerCase()}"/></svg>${name}</a></li>`
        ).join('');

        document.getElementById('drive-list').innerHTML = drives.map((d) => {
            let body = `<span class="block">${d.name}</span>`;
            if (d.label) {
                body += `<span class="block">${d.label}</span><span class="block text-[#6d6d6d]">${d.info}</span>`;
            } else if (d.total) {
                const used = (d.total - d.free) / d.total * 100;
                const color = used > 90 ? 'bg-[#da2626]' : 'bg-[#26a0da]';
                body += `<span class="mt-px -ml-px block w-[189px] h-[13px] border border-[#bcbcbc] bg-[#e6e6e6]"><span class="block h-full ${color}" style="width:${used}%"></span></span>`;
                body += `<span class="block pt-px pb-[2px] text-[#6d6d6d]">${num(d.free)} ${d.unit} frei von ${num(d.total)} ${d.unit}</span>`;
            }
            return `<li><a href="#" class="h-14 flex items-center gap-[5px]"><svg class="w-12 h-12 shrink-0"><use href="#${d.icon}"/></svg><span class="block leading-[15px]">${body}</span></a></li>`;
        }).join('');
    </script>
</body>
</html>
